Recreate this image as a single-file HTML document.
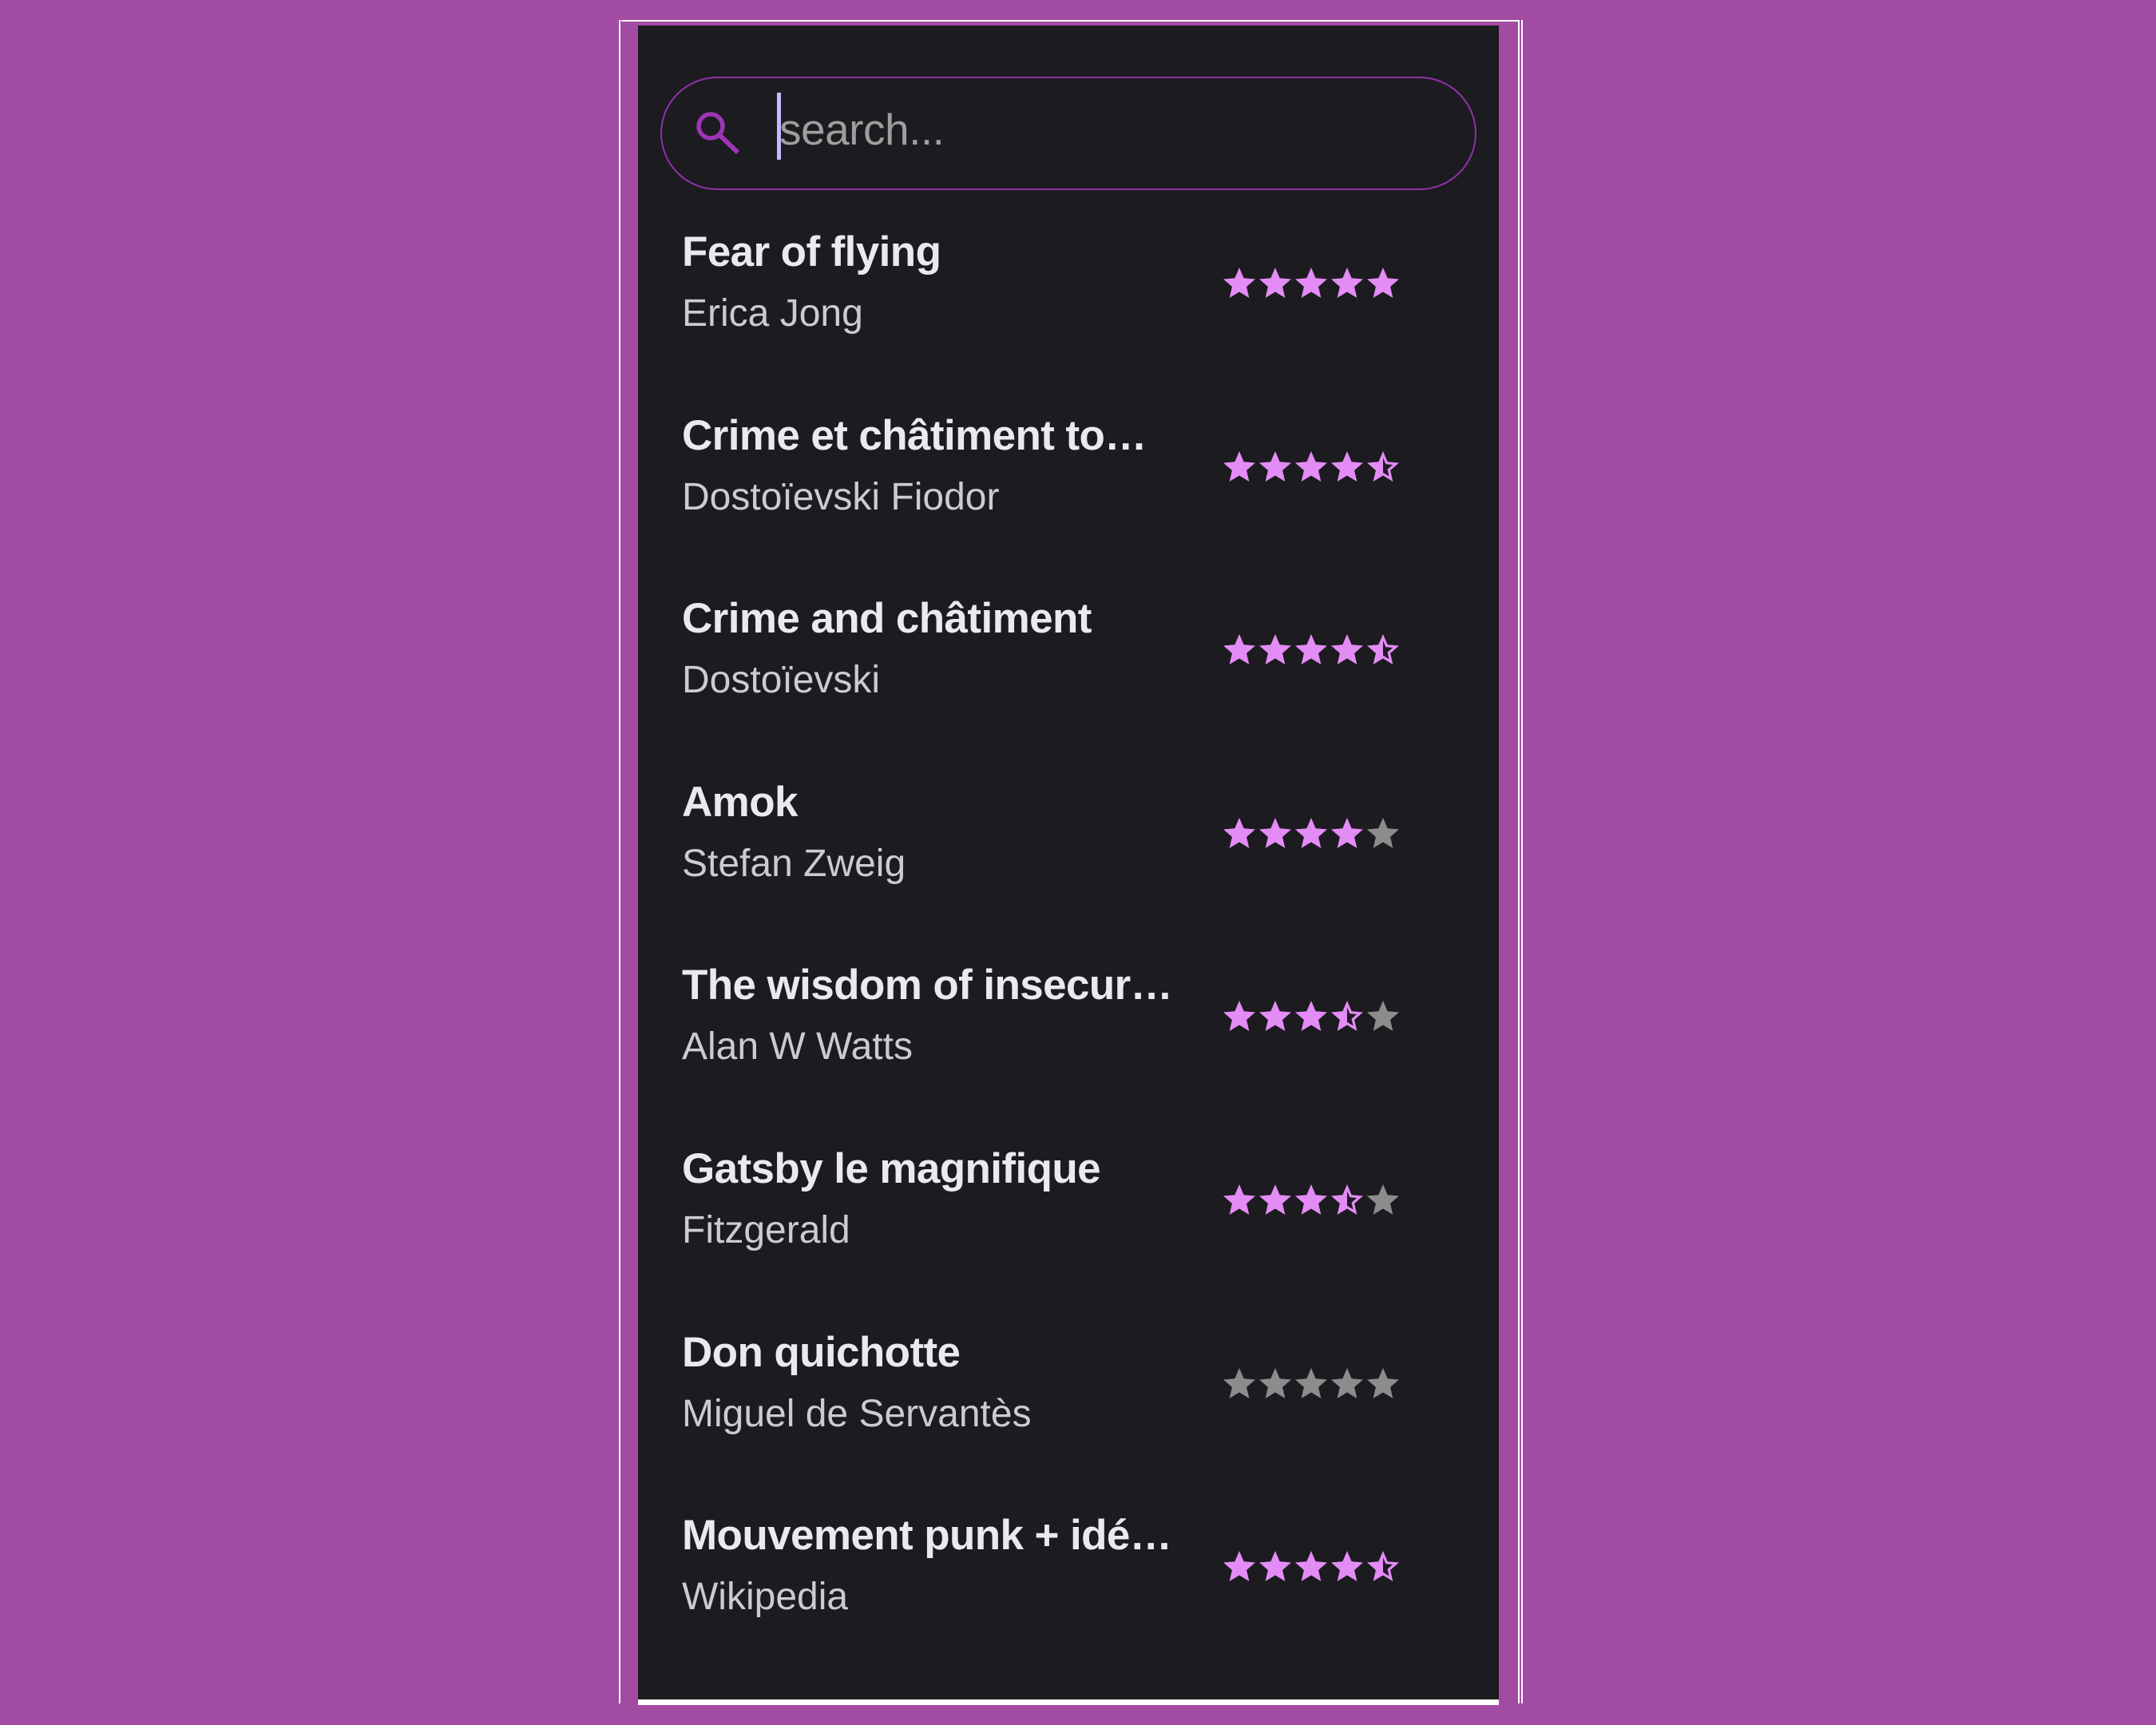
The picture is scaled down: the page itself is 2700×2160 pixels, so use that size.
<!DOCTYPE html>
<html><head><meta charset="utf-8"><style>
html,body{margin:0;padding:0;}
body{width:2700px;height:2160px;background:#a24ba3;position:relative;overflow:hidden;font-family:"Liberation Sans",Arial,sans-serif;}
.ln{position:absolute;background:#fff;}
#panel{position:absolute;left:799px;top:32px;width:1078px;height:2096px;background:#1c1b20;}
.search{position:absolute;left:827px;top:96px;width:1022px;height:142px;box-sizing:border-box;border:2.5px solid #8e32a6;border-radius:71px;}
.t{position:absolute;left:854px;font-weight:bold;font-size:53px;line-height:1;color:#ebe8ee;white-space:nowrap;letter-spacing:-0.6px}
.a{position:absolute;left:854px;font-size:48px;line-height:1;color:#cdcad1;white-space:nowrap}
.stars{position:absolute;left:1530px;height:44px;}
.stars svg{position:absolute;top:0;width:44px;height:44px;}
</style></head><body>
<div class="ln" style="left:775px;top:25px;width:2px;height:2108px"></div>
<div class="ln" style="left:778px;top:25px;width:1124px;height:2px"></div>
<div class="ln" style="left:1901px;top:25px;width:2px;height:2108px"></div>
<div class="ln" style="left:1905px;top:25px;width:2px;height:2108px"></div>
<div id="panel"></div>
<div class="ln" style="left:799px;top:2128px;width:1078px;height:7px"></div>
<div class="search"></div>
<svg style="position:absolute;left:860px;top:130px" width="80" height="70">
<circle cx="30" cy="28" r="15" fill="none" stroke="#9c36b5" stroke-width="5.5"/>
<line x1="41" y1="39" x2="64" y2="61" stroke="#9c36b5" stroke-width="6"/>
</svg>
<div style="position:absolute;left:973px;top:116px;width:5px;height:84px;background:#c9b8ff"></div>
<div style="position:absolute;left:976px;top:135px;font-size:55px;line-height:1;color:#9e9e9e;letter-spacing:-0.5px">search...</div>

<svg width="0" height="0" style="position:absolute">
<defs>
<path id="f" d="M12 17.27L18.18 21l-1.64-7.03L22 9.24l-7.19-.61L12 2 9.19 8.63 2 9.24l5.46 4.73L5.82 21z"/>
<path id="h" d="M22 9.24l-7.19-.62L12 2 9.19 8.63 2 9.24l5.46 4.73L5.82 21 12 17.27 18.18 21l-1.63-7.03L22 9.24zM12 15.4V6.1l1.71 4.04 4.38.38-3.32 2.88 1 4.28L12 15.4z"/>
</defs></svg>

<div id="rows"></div>
<script>
var data=[
["Fear of flying","Erica Jong","fffff"],
["Crime et châtiment to…","Dostoïevski Fiodor","ffffh"],
["Crime and châtiment","Dostoïevski","ffffh"],
["Amok","Stefan Zweig","ffffe"],
["The wisdom of insecur…","Alan W Watts","fffhe"],
["Gatsby le magnifique","Fitzgerald","fffhe"],
["Don quichotte","Miguel de Servantès","eeeee"],
["Mouvement punk + idé…","Wikipedia","ffffh"]
];
var h="";
for(var i=0;i<data.length;i++){
 var b=335+i*229.6;
 h+='<div class="t" style="top:'+(b-46)+'px">'+data[i][0]+'</div>';
 h+='<div class="a" style="top:'+(b+74-40)+'px">'+data[i][1]+'</div>';
 h+='<div class="stars" style="top:'+(b+20-22)+'px">';
 for(var k=0;k<5;k++){
  var c=data[i][2][k];
  var col=c=='e'?'#8c8c8c':'#e48cf6';
  var id=c=='h'?'h':'f';
  h+='<svg viewBox="1 1 22 22" style="left:'+(k*45)+'px"><use href="#'+id+'" fill="'+col+'"/></svg>';
 }
 h+='</div>';
}
document.getElementById('rows').innerHTML=h;
</script>
</body></html>
